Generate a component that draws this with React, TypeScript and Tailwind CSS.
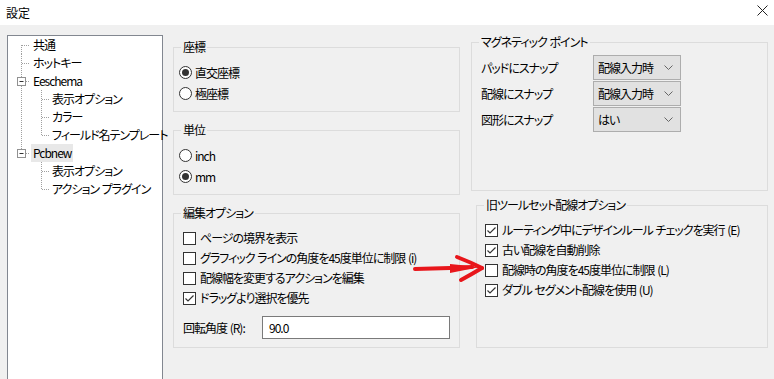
import React from "react";

type TreeItem = {
  label: string;
  level: 0 | 1;
  kind: "first" | "mid" | "parent" | "lastParent" | "child" | "lastChild";
  // whether the top-level dotted line passes through this child row
  through?: boolean;
  selected?: boolean;
};

const treeItems: TreeItem[] = [
  { label: "共通", level: 0, kind: "first" },
  { label: "ホットキー", level: 0, kind: "mid" },
  { label: "Eeschema", level: 0, kind: "parent" },
  { label: "表示オプション", level: 1, kind: "child", through: true },
  { label: "カラー", level: 1, kind: "child", through: true },
  { label: "フィールド名テンプレート", level: 1, kind: "lastChild", through: true },
  { label: "Pcbnew", level: 0, kind: "lastParent", selected: true },
  { label: "表示オプション", level: 1, kind: "child" },
  { label: "アクション プラグイン", level: 1, kind: "lastChild" },
];

const dot = { stroke: "#a0a0a0", strokeWidth: 1, strokeDasharray: "1 1" };

function Connector({ item }: { item: TreeItem }) {
  const w = item.level === 0 ? 23 : 42;
  const hasBox = item.kind === "parent" || item.kind === "lastParent";
  return (
    <svg width={w} height={18} className="shrink-0">
      {/* top level vertical line */}
      {item.level === 0 && item.kind === "first" && <line x1={13.5} y1={9} x2={13.5} y2={18} {...dot} />}
      {item.level === 0 && (item.kind === "mid" || item.kind === "parent") && (
        <line x1={13.5} y1={0} x2={13.5} y2={18} {...dot} />
      )}
      {item.kind === "lastParent" && <line x1={13.5} y1={0} x2={13.5} y2={5} {...dot} />}
      {item.level === 1 && item.through && <line x1={13.5} y1={0} x2={13.5} y2={18} {...dot} />}

      {item.level === 0 && !hasBox && <line x1={14} y1={9.5} x2={22} y2={9.5} {...dot} />}
      {hasBox && (
        <>
          <line x1={18} y1={9.5} x2={22} y2={9.5} {...dot} />
          <rect x={9.5} y={5.5} width={8} height={8} fill="#fff" stroke="#919191" />
          <line x1={11.5} y1={9.5} x2={15.5} y2={9.5} stroke="#333" />
        </>
      )}

      {item.level === 1 && (
        <>
          <line x1={33.5} y1={0} x2={33.5} y2={item.kind === "lastChild" ? 10 : 18} {...dot} />
          <line x1={34} y1={9.5} x2={42} y2={9.5} {...dot} />
        </>
      )}
    </svg>
  );
}

function Radio({ checked, label }: { checked?: boolean; label: string }) {
  return (
    <div className="flex h-[21px] items-center gap-[3px]">
      <span className="flex h-[13px] w-[13px] items-center justify-center rounded-full border border-[#333] bg-white">
        {checked && <span className="h-[7px] w-[7px] rounded-full bg-[#333]" />}
      </span>
      <span>{label}</span>
    </div>
  );
}

function Check({ checked, label }: { checked?: boolean; label: string }) {
  return (
    <div className="flex h-[20px] items-center gap-[4px]">
      <span className="flex h-[13px] w-[13px] shrink-0 items-center justify-center border border-[#333] bg-white">
        {checked && (
          <svg width="11" height="11" viewBox="0 0 11 11">
            <path d="M1.5 5.5 L4 8 L9.5 2.5" fill="none" stroke="#333" strokeWidth="1.2" />
          </svg>
        )}
      </span>
      <span className="whitespace-nowrap">{label}</span>
    </div>
  );
}

function Group({ title, className, children }: { title: string; className: string; children: React.ReactNode }) {
  return (
    <fieldset className={`border border-[#dcdcdc] ${className}`}>
      <legend className="ml-[7px] px-[2px] leading-4">{title}</legend>
      {children}
    </fieldset>
  );
}

function Select({ value }: { value: string }) {
  return (
    <div className="flex h-[25px] w-[88px] items-center justify-between border border-[#adadad] bg-[#e1e1e1] pl-[4px] pr-[7px]">
      <span>{value}</span>
      <svg width="9" height="5" viewBox="0 0 9 5">
        <path d="M0.5 0.5 L4.5 4.5 L8.5 0.5" fill="none" stroke="#666" />
      </svg>
    </div>
  );
}

export default function App() {
  return (
    <div className="relative h-[379px] w-[774px] overflow-hidden bg-[#f0f0f0] font-['Noto_Sans_CJK_JP',sans-serif] text-[12px] leading-4 tracking-[-1px] text-black [font-feature-settings:'palt'] [word-spacing:1px]">
      {/* title bar */}
      <div className="flex h-[25px] items-center justify-between bg-white pl-[6px] pr-[6px]">
        <span className="text-[12px] tracking-normal">設定</span>
        <svg width="11" height="11" viewBox="0 0 11 11" className="mb-[5px]">
          <path d="M0.5 0.5 L10.5 10.5 M10.5 0.5 L0.5 10.5" stroke="#222" strokeWidth="1" />
        </svg>
      </div>

      <div className="flex pl-[7px]">
        {/* tree */}
        <div className="mt-[10px] h-[360px] w-[156px] shrink-0 border border-[#828790] bg-white pt-0">
          {treeItems.map((item, i) => (
            <div key={i} className="flex h-[18px] items-center">
              <Connector item={item} />
              <span className={`whitespace-nowrap px-[2px] leading-[18px] ${item.selected ? "bg-[#e8e8e8]" : ""}`}>
                {item.label}
              </span>
            </div>
          ))}
        </div>

        {/* left column */}
        <div className="ml-[10px] mt-[14px] flex w-[287px] flex-col gap-[10px]">
          <Group title="座標" className="h-[73px]">
            <div className="pl-[5px] pt-[7px]">
              <Radio checked label="直交座標" />
              <Radio label="極座標" />
            </div>
          </Group>
          <Group title="単位" className="h-[73px]">
            <div className="pl-[5px] pt-[7px]">
              <Radio label="inch" />
              <Radio checked label="mm" />
            </div>
          </Group>
          <Group title="編集オプション" className="h-[143px]">
            <div className="pl-[9px] pt-[7px]">
              <Check label="ページの境界を表示" />
              <Check label="グラフィック ラインの角度を45度単位に制限 (i)" />
              <Check label="配線幅を変更するアクションを編集" />
              <Check checked label="ドラッグより選択を優先" />
              <div className="mt-[8px] flex items-center">
                <span className="w-[79px]">回転角度 (R):</span>
                <div className="flex h-[23px] w-[188px] items-center border border-[#7a7a7a] bg-white pl-[6px]">90.0</div>
              </div>
            </div>
          </Group>
        </div>

        {/* right column */}
        <div className="ml-[11px] mt-[9px] flex w-[297px] flex-col gap-[6px]">
          <Group title="マグネティック ポイント" className="h-[157px]">
            <div className="flex flex-col gap-[1px] pl-[9px] pt-[5px]">
              {[
                ["パッドにスナップ", "配線入力時"],
                ["配線にスナップ", "配線入力時"],
                ["図形にスナップ", "はい"],
              ].map(([label, value]) => (
                <div key={label} className="flex items-center">
                  <span className="w-[112px]">{label}</span>
                  <Select value={value} />
                </div>
              ))}
            </div>
          </Group>
          <Group title="旧ツールセット配線オプション" className="ml-[5px] h-[151px]">
            <div className="pl-[8px] pt-[7px]">
              <Check checked label="ルーティング中にデザインルール チェックを実行 (E)" />
              <Check checked label="古い配線を自動削除" />
              <Check label="配線時の角度を45度単位に制限 (L)" />
              <Check checked label="ダブル セグメント配線を使用 (U)" />
            </div>
          </Group>
        </div>
      </div>

      {/* red annotation arrow */}
      <svg width="80" height="36" viewBox="0 0 80 36" className="absolute left-[410px] top-[250px]">
        <path d="M5 19 L40 18 L62 17" fill="none" stroke="#e8161b" strokeWidth="4" strokeLinecap="round" />
        <polygon points="40,14 70,17 40,23" fill="#e8161b" />
        <path d="M47 7 Q60 12 72 18" fill="none" stroke="#e8161b" strokeWidth="4" strokeLinecap="round" />
        <path d="M72 18 Q62 24 51 30" fill="none" stroke="#e8161b" strokeWidth="4" strokeLinecap="round" />
      </svg>
    </div>
  );
}
